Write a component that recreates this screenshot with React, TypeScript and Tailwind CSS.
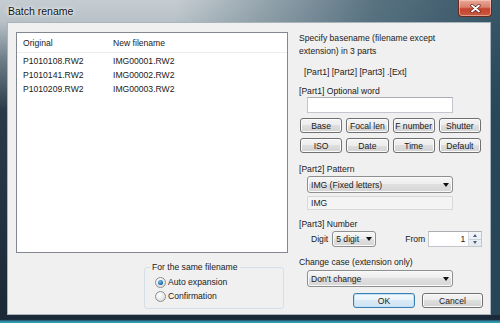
import React from 'react';

const rows = [
  ['P1010108.RW2', 'IMG00001.RW2'],
  ['P1010141.RW2', 'IMG00002.RW2'],
  ['P1010209.RW2', 'IMG00003.RW2'],
];

const tagButtons = ['Base', 'Focal len', 'F number', 'Shutter', 'ISO', 'Date', 'Time', 'Default'];

const btnClass =
  'flex items-center justify-center rounded-[3px] border border-[#707070] bg-[linear-gradient(180deg,#f4f4f4_0%,#ececec_50%,#dedede_50%,#d2d2d2_100%)] shadow-[inset_0_0_0_1px_#fbfbfb]';

const DownArrow = () => (
  <span className="h-0 w-0 border-x-[3px] border-t-[4px] border-x-transparent border-t-[#111]" />
);

const Combo = ({ value, className = '' }: { value: string; className?: string }) => (
  <div
    className={`flex items-center justify-between rounded-[3px] border border-[#8e8f8f] bg-[linear-gradient(180deg,#f7f7f7_0%,#ececec_50%,#dfdfdf_50%,#d6d6d6_100%)] pl-[3px] pr-[3px] shadow-[inset_0_0_0_1px_#fafafa] ${className}`}
  >
    <span>{value}</span>
    <DownArrow />
  </div>
);

const Radio = ({ checked, label }: { checked?: boolean; label: string }) => (
  <div className="flex h-[14px] items-center">
    <span className="flex h-[11px] w-[11px] items-center justify-center rounded-full border border-[#8e8f8f] bg-[radial-gradient(circle_at_40%_35%,#ffffff_0%,#e6e6e6_60%,#cfcfcf_100%)]">
      {checked && (
        <span className="h-[5px] w-[5px] rounded-full bg-[radial-gradient(circle_at_40%_35%,#7ec3ef_0%,#1f6ea8_60%,#0d4a7a_100%)]" />
      )}
    </span>
    <span className="ml-[2px]">{label}</span>
  </div>
);

export default function App() {
  return (
    <div className="flex h-[323px] w-[500px] flex-col overflow-hidden bg-[linear-gradient(90deg,rgba(60,90,108,0)_0%,rgba(60,90,108,0)_35%,rgba(52,84,102,0.75)_75%,rgba(40,72,90,0.9)_100%),linear-gradient(180deg,#c6cdd2_0px,#b7c1c7_22px,#6d7d88_60px,#2a3a48_110px,#1b2937_100%)] pl-[7px] pr-[9px] font-['Liberation_Sans',Arial,sans-serif] text-[8.6px] text-[#1a1a1a]">
      {/* title bar */}
      <div className="flex h-[22px] shrink-0 items-start">
        <span className="ml-[1px] mt-[5px] text-[10.5px] leading-[13px] text-[#111] [text-shadow:0_0_5px_#ffffff,0_0_2px_#ffffff]">
          Batch rename
        </span>
        <div className="-mr-[1px] ml-auto flex h-[17px] w-[34px] items-center justify-center rounded-b-[4px] border border-t-0 border-[#6b2a20] bg-[linear-gradient(180deg,#e9a998_0%,#d9806c_45%,#c5432e_55%,#c95a40_100%)] shadow-[inset_0_0_0_1px_rgba(255,220,210,0.5)]">
          <svg width="11" height="9" viewBox="0 0 11 9">
            <path d="M2 1.5 L9 7.5 M9 1.5 L2 7.5" stroke="#5a1e14" strokeWidth="3.2" strokeLinecap="round" />
            <path d="M2 1.5 L9 7.5 M9 1.5 L2 7.5" stroke="#ffffff" strokeWidth="1.9" strokeLinecap="round" />
          </svg>
        </div>
      </div>

      {/* client area */}
      <div className="flex flex-1 border border-[#a9b4bb] bg-[#f0f0f0] pl-[8px] pt-[9px]">
        {/* left column */}
        <div className="flex w-[272px] shrink-0 flex-col">
          <div className="h-[221px] border border-[#828790] bg-white">
            <div className="grid h-[20px] grid-cols-[95px_1fr] items-center border-b border-[#ececec] leading-[12px]">
              <span className="pl-[6px]">Original</span>
              <span className="pl-[1px]">New filename</span>
            </div>
            <div className="pt-[1px]">
              {rows.map(([orig, next]) => (
                <div key={orig} className="grid h-[14px] grid-cols-[95px_1fr] items-center leading-[12px]">
                  <span className="pl-[6px]">{orig}</span>
                  <span className="pl-[1px]">{next}</span>
                </div>
              ))}
            </div>
          </div>

          <fieldset className="ml-[128px] mt-[8px] w-[140px] rounded-[3px] border border-[#d5dfe5] pb-[5px] pl-[10px]">
            <legend className="-ml-[5px] px-[2px] leading-[12px]">For the same filename</legend>
            <div className="mt-[2px]">
              <Radio checked label="Auto expansion" />
              <Radio label="Confirmation" />
            </div>
          </fieldset>
        </div>

        {/* right column */}
        <div className="ml-[11px] flex w-[184px] flex-col leading-[12px]">
          <div className="leading-[13px]">
            Specify basename (filename except
            <br />
            extension) in 3 parts
          </div>
          <div className="mt-[8px] pl-[5px]">[Part1] [Part2] [Part3] .[Ext]</div>

          <div className="mt-[7px]">[Part1] Optional word</div>
          <div className="ml-[8px] h-[16px] w-[146px] border border-[#c3c7cd] border-t-[#abadb3] bg-white" />

          <div className="ml-[1px] mt-[5px] grid w-[181px] grid-cols-4 gap-x-[4px] gap-y-[5px]">
            {tagButtons.map((t) => (
              <div key={t} className={`h-[15px] ${btnClass}`}>
                {t}
              </div>
            ))}
          </div>

          <div className="mt-[10px]">[Part2] Pattern</div>
          <Combo value="IMG (Fixed letters)" className="ml-[8px] mt-[1px] h-[17px] w-[146px]" />
          <div className="ml-[8px] mt-[3px] flex h-[14px] w-[146px] items-center border border-[#d9d9d9] bg-[#f4f4f4] pl-[3px]">
            IMG
          </div>

          <div className="mt-[8px]">[Part3] Number</div>
          <div className="mt-[1px] flex h-[16px] items-center pl-[12px]">
            <span>Digit</span>
            <Combo value="5 digit" className="ml-[4px] h-[16px] w-[44px]" />
            <span className="ml-[29px]">From</span>
            <div className="ml-[3px] flex h-[16px] w-[54px] border border-[#c3c7cd] border-t-[#abadb3] bg-white">
              <div className="flex flex-1 items-center justify-end pr-[3px]">1</div>
              <div className="flex w-[13px] flex-col border-l border-[#d6dce3] bg-[linear-gradient(180deg,#f3f6f9,#e3e9ef)]">
                <div className="flex flex-1 items-center justify-center border-b border-[#c9d1da]">
                  <span className="h-0 w-0 border-x-[2.5px] border-b-[3px] border-x-transparent border-b-[#4b5d7c]" />
                </div>
                <div className="flex flex-1 items-center justify-center">
                  <span className="h-0 w-0 border-x-[2.5px] border-t-[3px] border-x-transparent border-t-[#4b5d7c]" />
                </div>
              </div>
            </div>
          </div>

          <div className="mt-[9px]">Change case (extension only)</div>
          <Combo value="Don't change" className="ml-[8px] mt-[2px] h-[17px] w-[146px]" />

          <div className="mt-[6px] flex">
            <div className="ml-[54px] flex h-[15px] w-[62px] items-center justify-center rounded-[3px] border border-[#3c7fb1] bg-[linear-gradient(180deg,#f5fafd_0%,#e9f3fa_50%,#d9eaf6_50%,#cfe4f3_100%)] shadow-[inset_0_0_0_1px_#bfe0f6]">
              OK
            </div>
            <div className={`ml-[7px] h-[15px] w-[61px] ${btnClass}`}>Cancel</div>
          </div>
        </div>
      </div>

      {/* bottom frame */}
      <div className="-ml-[7px] -mr-[9px] h-[8px] shrink-0 bg-[linear-gradient(180deg,#1b2938_0%,#1b2938_55%,#2b7f97_75%,#3aa6c0_100%)]" />
    </div>
  );
}
